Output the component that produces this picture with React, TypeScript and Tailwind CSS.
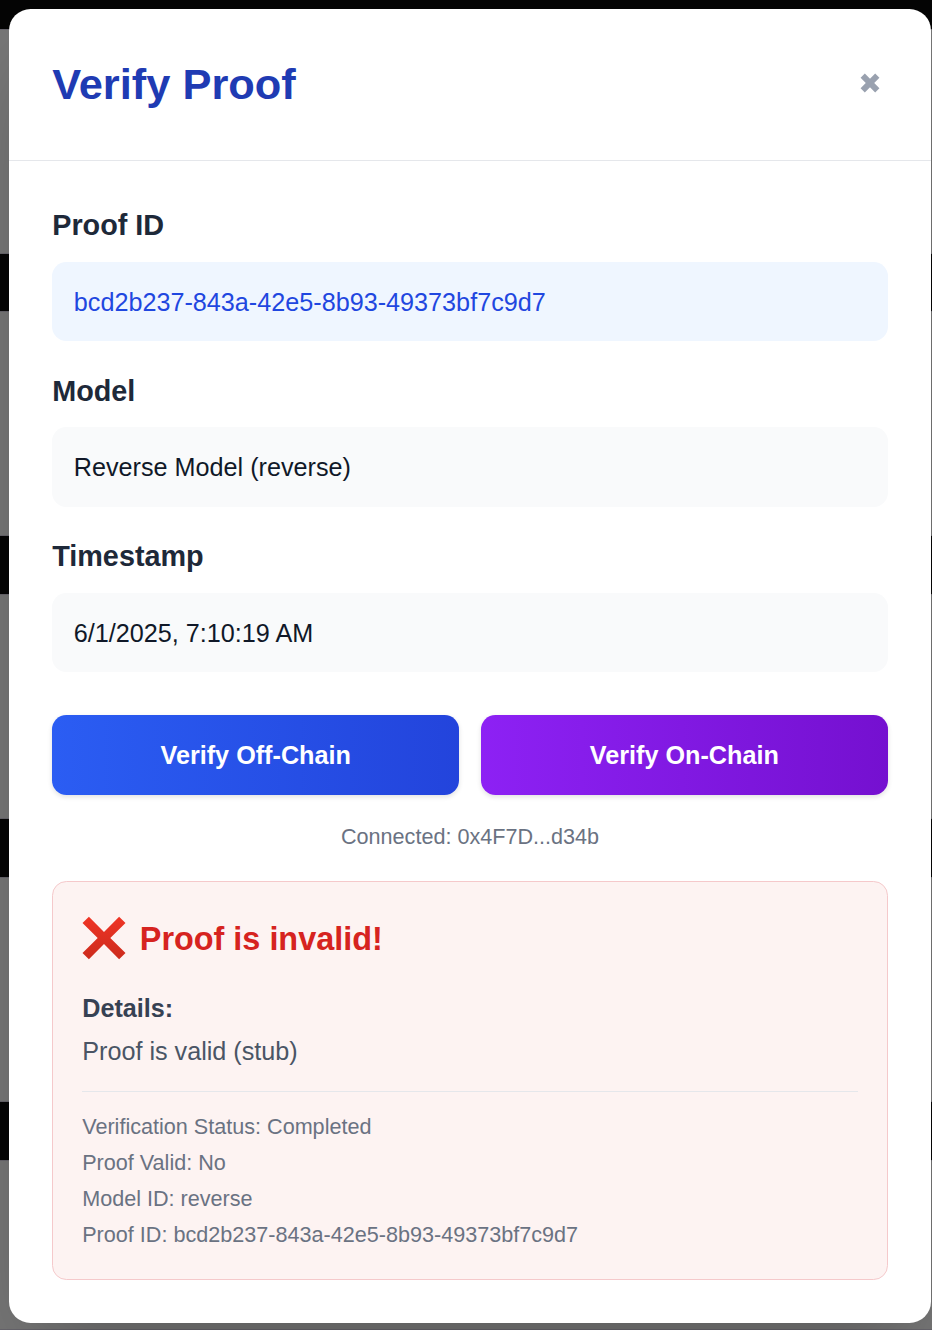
import React from "react";

function Field({ label, value, tone }: { label: string; value: string; tone: string }) {
  return (
    <div className="h-[165.6px]">
      <h3 className="h-[59px] pt-[1.3px] text-[28.8px] leading-[43px] font-bold text-[#1e2939]">{label}</h3>
      <div className={`flex h-[79.2px] items-center rounded-[14.4px] px-[21.6px] pt-[2.2px] text-[25.2px] ${tone}`}>
        {value}
      </div>
    </div>
  );
}

function Backdrop() {
  return (
    <div className="absolute inset-0 flex flex-col bg-[#050505]">
      <div className="mt-[29px] h-[225px] shrink-0 border-y border-[#68666d] bg-[#777]" />
      <div className="mt-[57px] h-[225px] shrink-0 border-y border-[#68666d] bg-[#777]" />
      <div className="mt-[58px] h-[225px] shrink-0 border-y border-[#68666d] bg-[#777]" />
      <div className="mt-[58px] h-[225px] shrink-0 border-y border-[#68666d] bg-[#777]" />
      <div className="mt-[58px] h-[170px] shrink-0 border-y border-[#68666d] bg-[#777]" />
    </div>
  );
}

const facts = [
  "Verification Status: Completed",
  "Proof Valid: No",
  "Model ID: reverse",
  "Proof ID: bcd2b237-843a-42e5-8b93-49373bf7c9d7",
];

export default function App() {
  return (
    <div className="relative h-[1330px] w-[932px] overflow-hidden pt-[9px] pl-[9px] font-['Liberation_Sans',Arial,sans-serif]">
      <Backdrop />
      <div className="relative flex h-[1314px] w-[922px] flex-col rounded-[21.6px] bg-white shadow-[0_45px_90px_-22px_rgba(0,0,0,0.25)]">
        <header className="flex h-[152px] shrink-0 justify-between border-b border-[#e5e7eb] pr-[51px] pl-[43.2px]">
          <h2 className="mt-[43px] text-[43.4px] leading-[65px] font-bold text-[#1f3bb3]">Verify Proof</h2>
          <button aria-label="Close" className="mt-[64px] h-[20px] w-[20px] text-[#99a1af]">
            <svg viewBox="0 0 20 20" className="block h-5 w-5" fill="none" stroke="currentColor" strokeWidth="6">
              <path d="M2.7 2.7 17.3 17.3M17.3 2.7 2.7 17.3" />
            </svg>
          </button>
        </header>
        <main className="px-[43.2px] pt-[41.8px]">
          <Field label="Proof ID" value="bcd2b237-843a-42e5-8b93-49373bf7c9d7" tone="bg-[#eff6ff] text-[#1f47e0]" />
          <Field label="Model" value="Reverse Model (reverse)" tone="bg-[#f9fafb] text-[#101828]" />
          <Field label="Timestamp" value="6/1/2025, 7:10:19 AM" tone="bg-[#f9fafb] text-[#101828]" />
          <div className="mt-[15.2px] grid h-[80px] grid-cols-2 gap-[21.6px] text-[25.2px] font-bold text-white">
            <button className="rounded-[14.4px] bg-linear-to-r from-[#2b5df3] to-[#2344dc] pt-[2px] shadow-[0_2px_5px_rgba(0,0,0,0.12)]">
              Verify Off-Chain
            </button>
            <button className="rounded-[14.4px] bg-linear-to-r from-[#8d21f4] to-[#7510d0] pt-[2px] shadow-[0_2px_5px_rgba(0,0,0,0.12)]">
              Verify On-Chain
            </button>
          </div>
          <p className="mt-[25px] text-center text-[21.6px] leading-[33px] text-[#6a7282]">Connected: 0x4F7D...d34b</p>
          <section className="mt-[28px] h-[399px] rounded-[14.4px] border border-[#f5c9cb] bg-[#fdf3f2] px-[29px] pt-[28px]">
            <div className="flex h-[58px] items-center gap-[14px]">
              <svg viewBox="0 0 44 44" className="-mt-[2px] -ml-[0.4px] h-[44px] w-[44px]">
                <defs>
                  <linearGradient id="cross" x1="0" y1="0" x2="0" y2="1">
                    <stop offset="0" stopColor="#ef3425" />
                    <stop offset="1" stopColor="#cc2b1d" />
                  </linearGradient>
                </defs>
                <path
                  fill="url(#cross)"
                  d="M.5 6.9 6.9.7 22 16 37.1.7 43.5 6.9 28.3 22 43.5 37 37.1 43.2 22 28 6.9 43.2.5 37 15.7 22Z"
                />
              </svg>
              <h3 className="text-[32.4px] leading-[50px] font-bold text-[#d62320]">Proof is invalid!</h3>
            </div>
            <h4 className="mt-[20px] text-[25.2px] leading-[40px] font-bold text-[#364153]">Details:</h4>
            <p className="mt-[3px] text-[25.2px] leading-[40px] text-[#4a5565]">Proof is valid (stub)</p>
            <ul className="mt-[20px] border-t border-[#e5e7eb] pt-[17px] text-[21.6px] leading-[36px] text-[#6a7282]">
              {facts.map((fact) => (
                <li key={fact}>{fact}</li>
              ))}
            </ul>
          </section>
        </main>
      </div>
    </div>
  );
}
